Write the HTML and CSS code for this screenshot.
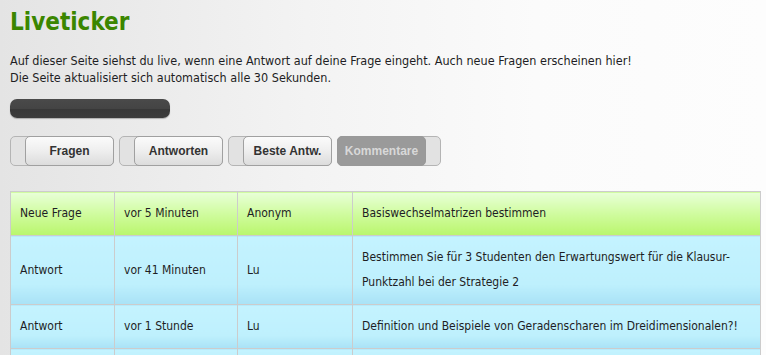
FILE: index.html
```html
<!DOCTYPE html>
<html lang="de">
<head>
    <meta charset="UTF-8">
    <title>Liveticker</title>
    <link rel="stylesheet" href="styles.css">
</head>
<body>
    <h1 class="title">Liveticker</h1>

    <p class="intro">
        Auf dieser Seite siehst du live, wenn eine Antwort auf deine Frage eingeht. Auch neue Fragen erscheinen hier!<br>
        Die Seite aktualisiert sich automatisch alle 30 Sekunden.
    </p>

    <div class="progress"></div>

    <div class="toggles">
        <div class="toggle"><span class="toggle-btn">Fragen</span></div>
        <div class="toggle"><span class="toggle-btn">Antworten</span></div>
        <div class="toggle"><span class="toggle-btn">Beste Antw.</span></div>
        <div class="toggle off"><span class="toggle-btn">Kommentare</span></div>
    </div>

    <table class="ticker">
        <colgroup>
            <col class="c-type">
            <col class="c-time">
            <col class="c-user">
            <col class="c-text">
        </colgroup>
        <tr class="question">
            <td>Neue Frage</td>
            <td>vor 5 Minuten</td>
            <td>Anonym</td>
            <td>Basiswechselmatrizen bestimmen</td>
        </tr>
        <tr class="answer">
            <td>Antwort</td>
            <td>vor 41 Minuten</td>
            <td>Lu</td>
            <td>Bestimmen Sie für 3 Studenten den Erwartungswert für die Klausur-Punktzahl bei der Strategie 2</td>
        </tr>
        <tr class="answer">
            <td>Antwort</td>
            <td>vor 1 Stunde</td>
            <td>Lu</td>
            <td>Definition und Beispiele von Geradenscharen im Dreidimensionalen?!</td>
        </tr>
        <tr class="answer">
            <td></td>
            <td></td>
            <td></td>
            <td></td>
        </tr>
    </table>
</body>
</html>
```

FILE: styles.css
```css
html {
    background: linear-gradient(to right, #e4e4e4 0%, #f3f3f3 40%, #fbfbfb 70%, #fdfdfd 100%);
    min-height: 100%;
}

body {
    margin: 0;
    padding: 8px 10px;
    font-family: "DejaVu Sans", Verdana, sans-serif;
    font-stretch: condensed;
    font-size: 12px;
    color: #1e1e24;
    overflow: hidden;
}

.title {
    margin: 0;
    font-size: 24px;
    line-height: 28px;
    font-weight: bold;
    color: #3b8600;
}

.intro {
    margin: 16px 0 0;
    font-size: 12.5px;
    line-height: 17px;
}

.progress {
    width: 160px;
    height: 19px;
    margin-top: 13px;
    border-radius: 7px;
    background: linear-gradient(#4a4a4a, #444 50%, #383838 55%, #3c3c3c);
    box-shadow: 0 1px 1px rgba(0, 0, 0, 0.25);
}

.toggles {
    display: flex;
    gap: 5px;
    margin-top: 18px;
}

.toggle {
    display: flex;
    justify-content: flex-end;
    width: 104px;
    height: 30px;
    box-sizing: border-box;
    border: 1px solid #b4b4b4;
    border-radius: 5px;
    background: #e2e2e2;
}

.toggle-btn {
    display: flex;
    align-items: center;
    justify-content: center;
    width: 87px;
    margin: -1px -1px -1px 0;
    border: 1px solid #a0a0a0;
    border-radius: 5px;
    background: linear-gradient(#fbfbfb, #eeeeee 50%, #dcdcdc);
    font-family: "Liberation Sans", Arial, sans-serif;
    font-stretch: normal;
    font-weight: bold;
    font-size: 12px;
    color: #333;
}

.toggle.off {
    justify-content: flex-start;
}

.toggle.off .toggle-btn {
    margin: -1px 0 -1px -1px;
    border-color: #999;
    background: #9a9a9a;
    color: #d8d8d8;
}

.ticker {
    margin-top: 25px;
    width: 750px;
    border-collapse: collapse;
    table-layout: fixed;
}

.c-type { width: 104px; }
.c-time { width: 123px; }
.c-user { width: 115px; }
.c-text { width: 408px; }

.ticker td {
    border: 1px solid #cccccc;
    padding: 9px 9px;
    line-height: 25px;
    vertical-align: middle;
}

.question td {
    background: linear-gradient(#e8ffd8, #d2fca4 45%, #b9f66c);
}

.answer td {
    background: linear-gradient(#c4f3ff, #bef0fd 70%, #a9e2f6);
}
```
